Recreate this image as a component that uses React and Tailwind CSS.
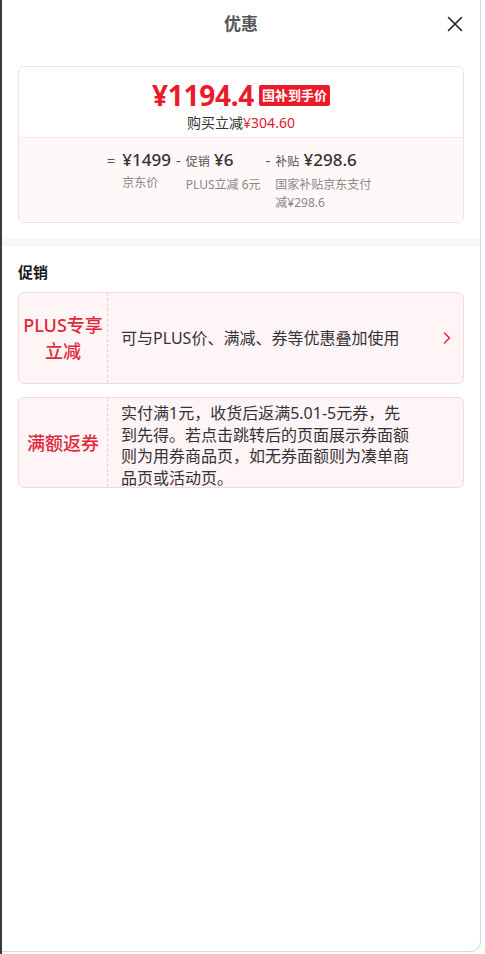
export default function App() {
  return (
    <div className="w-[485px] h-[954px] bg-white flex font-['Noto_Sans','Noto_Sans_CJK_SC',sans-serif] text-[#333]">
      <div className="w-[2px] h-full bg-[#3b3b3b]" />
      <div className="w-[479px] h-[952px] bg-white border-r border-b border-[#d9d9d9] rounded-br-[10px] flex flex-col">
        <div className="relative h-[46px] flex items-center justify-center">
          <span className="text-[17px] font-bold text-[#555] leading-none">优惠</span>
          <svg className="absolute right-[17px] top-[16px]" width="16" height="16" viewBox="0 0 16 16">
            <path d="M1.5 1.5 L14.5 14.5 M14.5 1.5 L1.5 14.5" stroke="#222" strokeWidth="1.6" strokeLinecap="round" />
          </svg>
        </div>

        <div className="px-4 mt-[20px]">
          <div className="border border-[#f5dfe2] rounded-[6px] overflow-hidden">
            <div className="h-[71px] pt-[12px] flex flex-col items-center bg-white border-b border-[#f7e6e8]">
              <div className="h-[32px] flex items-center">
                <span className="text-[28px] font-bold text-[#ea1b2b] leading-[30px] tracking-[-0.3px]">¥1194.4</span>
                <span className="ml-[5px] mt-[1px] h-[21px] px-[3px] flex items-center bg-[#ea1b2b] text-white text-[13px] font-bold rounded-[2px] leading-none">国补到手价</span>
              </div>
              <div className="mt-[2px] h-[20px] leading-[20px] text-[14px] text-[#333]">
                购买立减<span className="text-[#e4202e]">¥304.60</span>
              </div>
            </div>
            <div className="bg-[#fff8f8] pt-[11px] pb-[10px] flex justify-center gap-[5px]">
              <div className="flex">
                <span className="text-[15px] leading-[22px] text-[#555] mr-[7px]">=</span>
                <div className="flex flex-col">
                  <span className="text-[17px] font-medium leading-[22px] text-[#333]">¥1499</span>
                  <span className="mt-[3px] text-[12px] leading-[18px] text-[#888]">京东价</span>
                </div>
              </div>
              <div className="flex">
                <span className="text-[15px] leading-[22px] text-[#555] mr-[5px]">-</span>
                <div className="flex flex-col">
                  <span className="leading-[22px] text-[#333]"><span className="text-[12px] text-[#555]">促销</span> <span className="text-[17px] font-medium">¥6</span></span>
                  <span className="mt-[3px] text-[12px] leading-[18px] text-[#888]">PLUS立减 6元</span>
                </div>
              </div>
              <div className="flex">
                <span className="text-[15px] leading-[22px] text-[#555] mr-[5px]">-</span>
                <div className="flex flex-col">
                  <span className="leading-[22px] text-[#333]"><span className="text-[12px] text-[#555]">补贴</span> <span className="text-[17px] font-medium">¥298.6</span></span>
                  <span className="mt-[3px] max-w-[100px] text-[12px] leading-[18px] text-[#888]">国家补贴京东支付减¥298.6</span>
                </div>
              </div>
            </div>
          </div>
        </div>

        <div className="mt-[16px] h-[8px] bg-[#f5f7fa]" />

        <div className="px-4">
          <div className="mt-[15px] text-[15px] font-bold leading-[20px] text-[#1a1a1a]">促销</div>

          <div className="mt-[10px] h-[92px] flex bg-[#fff5f6] border border-[#f6d9dd] rounded-[6px]">
            <div className="w-[89px] shrink-0 flex items-center justify-center text-center border-r border-dashed border-[#e6cfd2] text-[18px] font-medium leading-[26px] text-[#e0283c]">
              PLUS专享<br />立减
            </div>
            <div className="flex-1 flex items-center pl-[13px] pr-[12px] text-[16px] leading-[22px] text-[#333]">
              <span className="flex-1">可与PLUS价、满减、券等优惠叠加使用</span>
              <svg width="8" height="14" viewBox="0 0 8 14">
                <path d="M1.5 2 L6.5 7 L1.5 12" stroke="#e0283c" strokeWidth="1.5" fill="none" strokeLinecap="round" strokeLinejoin="round" />
              </svg>
            </div>
          </div>

          <div className="mt-[13px] h-[91px] flex bg-[#fff5f6] border border-[#f6d9dd] rounded-[6px]">
            <div className="w-[89px] shrink-0 flex items-center justify-center text-center border-r border-dashed border-[#e6cfd2] text-[18px] font-medium leading-[26px] text-[#e0283c]">
              满额返券
            </div>
            <div className="flex items-start pl-[13px] pt-[5px]">
              <span className="w-[290px] text-[16px] leading-[21.7px] text-[#333]">实付满1元，收货后返满5.01-5元券，先到先得。若点击跳转后的页面展示券面额则为用券商品页，如无券面额则为凑单商品页或活动页。</span>
            </div>
          </div>
        </div>
      </div>
    </div>
  );
}
